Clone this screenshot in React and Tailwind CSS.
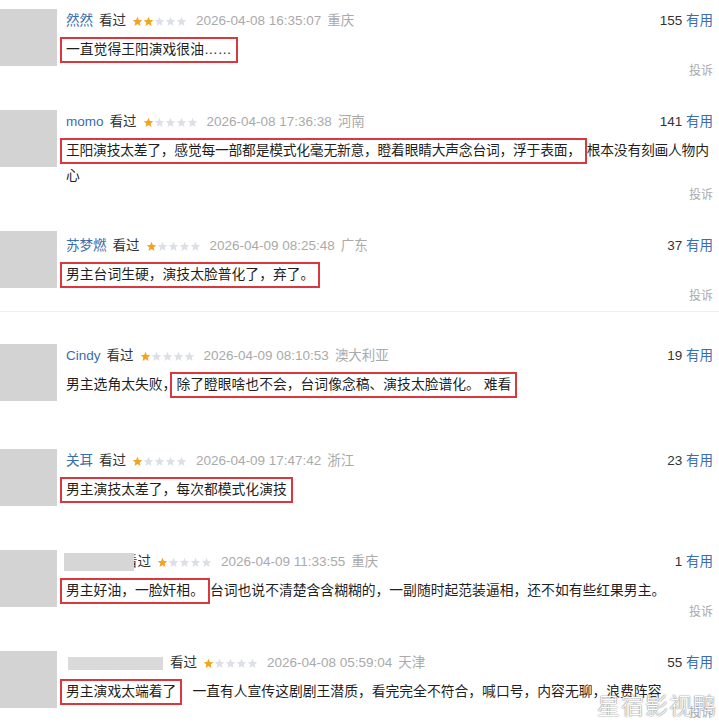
const FONT = "font-['Liberation_Sans','Noto_Sans_CJK_SC',sans-serif]";

function Stars({ n }) {
  return (
    <span className="flex items-center">
      {[0, 1, 2, 3, 4].map((i) => (
        <svg key={i} viewBox="0 0 24 24" className="w-[11px] h-[11px]">
          <polygon
            points="12,1.5 14.9,8.6 22.5,9.2 16.7,14.1 18.5,21.6 12,17.6 5.5,21.6 7.3,14.1 1.5,9.2 9.1,8.6"
            fill={i < n ? '#f5a21c' : '#dcdfe6'}
          />
        </svg>
      ))}
    </span>
  );
}

function Box({ children }) {
  return (
    <span className="inline-block -ml-[6px] px-[4px] py-[1px] leading-[20px] border-2 border-[#d9383e]">
      {children}
    </span>
  );
}

const ITEMS = [
  {
    name: '然然', stars: 2, date: '2026-04-08 16:35:07', loc: '重庆', count: 155, report: true,
    h: 'h-[101px]', metaPad: '',
    body: <div><Box>一直觉得王阳演戏很油……</Box></div>,
  },
  {
    name: 'momo', stars: 1, date: '2026-04-08 17:36:38', loc: '河南', count: 141, report: true,
    h: 'h-[121px]', metaPad: '',
    body: (
      <>
        <div className="whitespace-nowrap tracking-[-0.25px]">
          <Box>王阳演技太差了，感觉每一部都是模式化毫无新意，瞪着眼睛大声念台词，浮于表面，</Box>根本没有刻画人物内
        </div>
        <div>心</div>
      </>
    ),
  },
  {
    name: '苏梦燃', stars: 1, date: '2026-04-09 08:25:48', loc: '广东', count: 37, report: true,
    h: 'h-[113px]', metaPad: 'pt-[3px]', sep: true,
    body: <div><Box>男主台词生硬，演技太脸普化了，弃了。</Box></div>,
  },
  {
    name: 'Cindy', stars: 1, date: '2026-04-09 08:10:53', loc: '澳大利亚', count: 19, report: false,
    h: 'h-[105px]', metaPad: '',
    body: <div className="whitespace-nowrap">男主选角太失败，<Box>除了瞪眼啥也不会，台词像念稿、演技太脸谱化。 难看</Box></div>,
  },
  {
    name: '关耳', stars: 1, date: '2026-04-09 17:47:42', loc: '浙江', count: 23, report: false,
    h: 'h-[101px]', metaPad: '',
    body: <div><Box>男主演技太差了，每次都模式化演技</Box></div>,
  },
  {
    blur: 'w-[70px] h-[18px] bg-[#d6d6d6] -mr-[10px] -ml-[2px]', stars: 1, date: '2026-04-09 11:33:55', loc: '重庆', count: 1, report: true,
    h: 'h-[101px]', metaPad: '',
    body: (
      <div className="whitespace-nowrap">
        <Box>男主好油，一脸奸相。</Box>台词也说不清楚含含糊糊的，一副随时起范装逼相，还不如有些红果男主。
      </div>
    ),
  },
  {
    blur: 'w-[95px] h-[13px] bg-[#dadada] mr-[7px] ml-[2px]', stars: 1, date: '2026-04-08 05:59:04', loc: '天津', count: 55, report: true,
    h: 'h-[80px]', metaPad: '',
    body: (
      <div className="whitespace-nowrap">
        <Box>男主演戏太端着了</Box>
        <span className="ml-[10px]">一直有人宣传这剧剧王潜质，看完完全不符合，喊口号，内容无聊，浪费阵容</span>
      </div>
    ),
  },
];

function Comment({ item }) {
  return (
    <div className={`${item.h} flex flex-col`}>
      <div className="flex gap-[9px]">
        <div className="w-[57px] h-[57px] shrink-0 bg-[#d3d3d3]" />
        <div className="flex-1 min-w-0 pr-[6px]">
          <div className={item.metaPad}>
            <div className="h-[24px] flex items-center justify-between text-[13.5px]">
              <div className="flex items-center whitespace-nowrap">
                {item.blur ? (
                  <span className={`relative z-10 ${item.blur}`} />
                ) : (
                  <span className="text-[#3a6cb0] mr-[6px]">{item.name}</span>
                )}
                <span className="text-[#333] mr-[6px]">看过</span>
                <Stars n={item.stars} />
                <span className="text-[#aaa] ml-[9px]">{item.date}</span>
                <span className="text-[#aaa] ml-[6px]">{item.loc}</span>
              </div>
              <div className="whitespace-nowrap text-[#333]">
                {item.count} <span className="text-[#3a6cb0]">有用</span>
              </div>
            </div>
          </div>
          <div className="mt-[4px] text-[13.8px] leading-[23px] text-[#1f1f1f]">{item.body}</div>
          <div className={`text-right text-[12px] leading-[17px] text-[#aaa] ${item.report ? '' : 'invisible'}`}>投诉</div>
        </div>
      </div>
      {item.sep && <div className="mt-[6px] h-px bg-[#eeeeee]" />}
    </div>
  );
}

export default function App() {
  return (
    <div className={`relative w-[719px] h-[726px] overflow-hidden bg-white pt-[9px] ${FONT}`}>
      {ITEMS.map((item, i) => (
        <Comment key={i} item={item} />
      ))}
      <div className="absolute right-[2px] bottom-[5px] text-[23px] font-light tracking-[1px] text-white font-['Noto_Sans_CJK_SC',sans-serif] [text-shadow:0_0_1px_#666,0_0_2px_#999]">
        星宿影视鸭
      </div>
    </div>
  );
}
